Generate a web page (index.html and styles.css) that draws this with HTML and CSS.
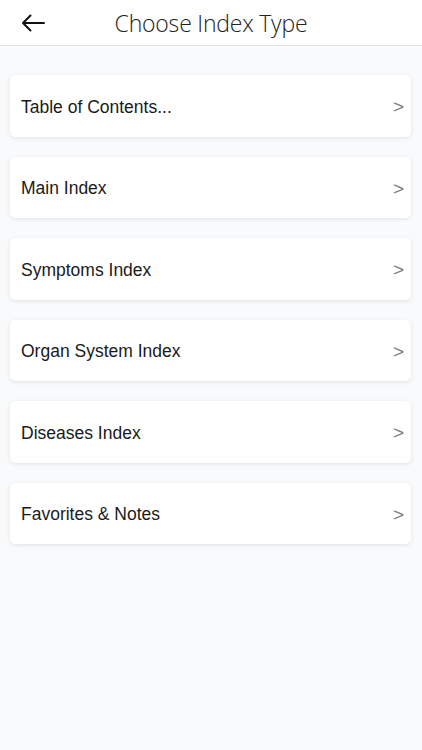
FILE: index.html
```html
<!DOCTYPE html>
<html>
<head>
<meta charset="utf-8">
<link rel="stylesheet" href="styles.css">
</head>
<body>
<header class="bar">
  <span class="back">
    <svg width="24" height="18" viewBox="0 0 24 18"><path d="M23 9H2M9.5 1.5L2 9l7.5 7.5" fill="none" stroke="#111" stroke-width="2" stroke-linecap="round" stroke-linejoin="round"/></svg>
  </span>
  <h1 class="title">Choose Index Type</h1>
</header>
<main class="list">
  <div class="card"><span>Table of Contents...</span><span class="chev">&gt;</span></div>
  <div class="card"><span>Main Index</span><span class="chev">&gt;</span></div>
  <div class="card"><span>Symptoms Index</span><span class="chev">&gt;</span></div>
  <div class="card"><span>Organ System Index</span><span class="chev">&gt;</span></div>
  <div class="card"><span>Diseases Index</span><span class="chev">&gt;</span></div>
  <div class="card"><span>Favorites &amp; Notes</span><span class="chev">&gt;</span></div>
</main>
</body>
</html>
```
FILE: styles.css
```css
html, body { margin: 0; padding: 0; }
body {
  width: 422px;
  height: 750px;
  background: #f9fafc;
  font-family: "Liberation Sans", Arial, sans-serif;
  color: #1a1a1a;
}
.bar {
  height: 45px;
  background: #fff;
  border-bottom: 1px solid #e2e2e4;
  display: flex;
  align-items: center;
  justify-content: center;
  position: relative;
}
.back {
  position: absolute;
  left: 21px;
  top: 14px;
  display: flex;
}
.title {
  margin: 0;
  font-family: "Open Sans", "Liberation Sans", sans-serif;
  font-weight: 300;
  font-size: 23px;
  color: #222;
  letter-spacing: -0.2px;
}
.list {
  display: flex;
  flex-direction: column;
  gap: 20px;
  padding: 29px 11px 0 10px;
}
.card {
  height: 61.5px;
  box-sizing: border-box;
  background: #fff;
  border-radius: 5px;
  box-shadow: 0 1px 4px rgba(0,0,0,0.10);
  display: flex;
  align-items: center;
  justify-content: space-between;
  padding: 3px 7px 0 11px;
  font-size: 17.5px;
}
.chev {
  font-family: "Liberation Sans", sans-serif;
  color: #7a7a7a;
  font-size: 19px;
}
```
